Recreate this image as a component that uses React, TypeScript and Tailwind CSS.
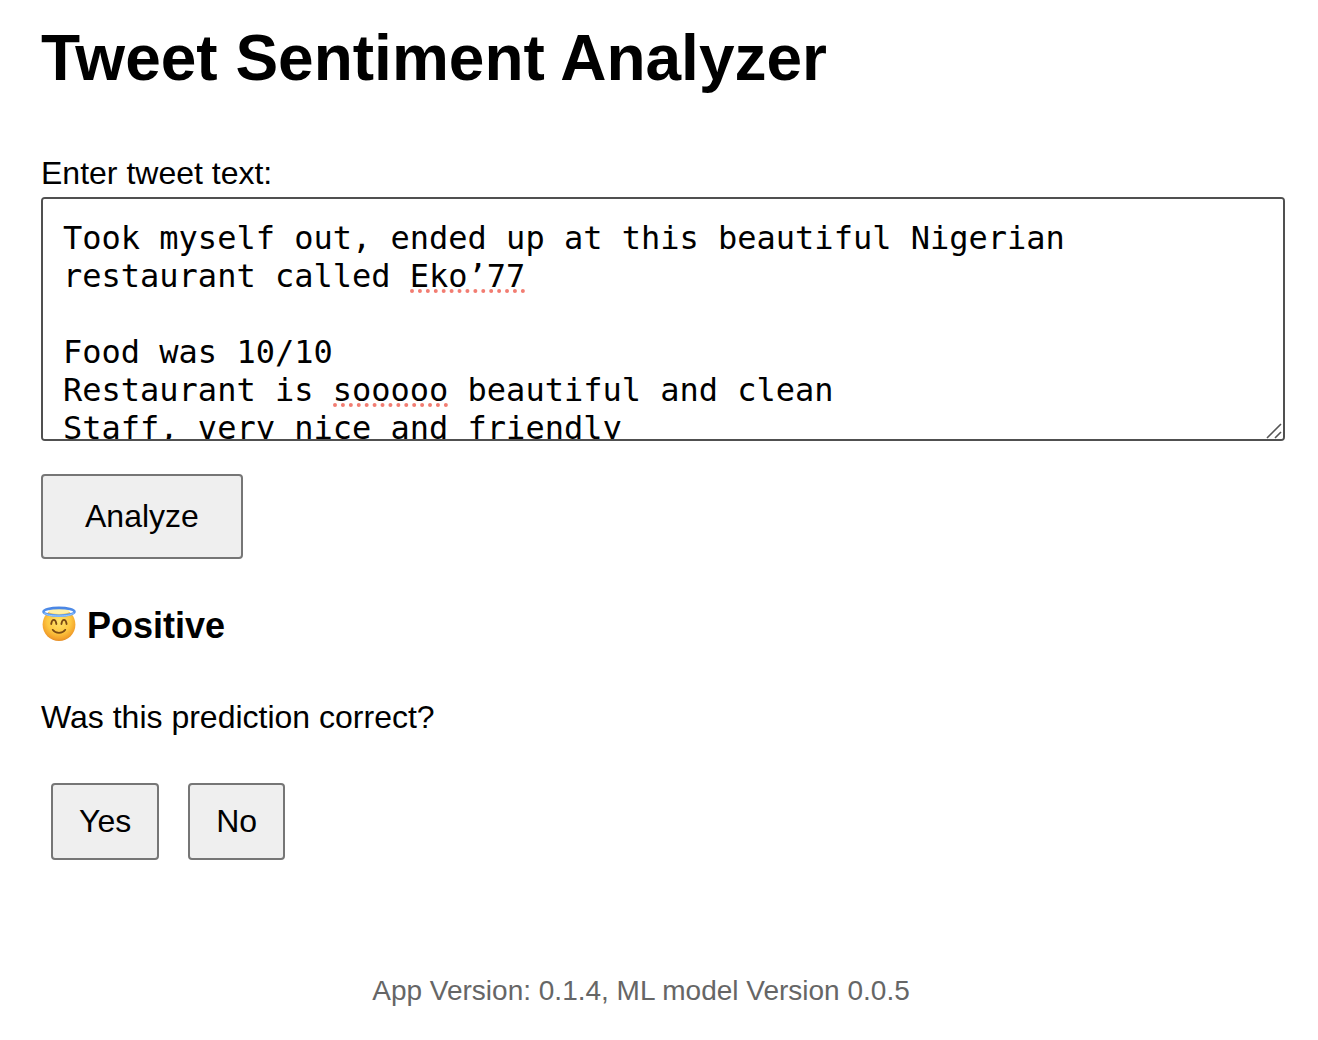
import { useState } from "react";

const SAMPLE = `Took myself out, ended up at this beautiful Nigerian restaurant called Eko’77

Food was 10/10
Restaurant is sooooo beautiful and clean
Staff, very nice and friendly`;

function HaloFace() {
  return (
    <svg viewBox="0 0 36 36" className="mt-px size-9 shrink-0" role="img" aria-label="Smiling face with halo">
      <defs>
        <radialGradient id="face" cx="0.5" cy="0.4" r="0.6">
          <stop offset="0" stopColor="#ffe36b" />
          <stop offset="0.6" stopColor="#fdc741" />
          <stop offset="0.88" stopColor="#f3a32c" />
          <stop offset="1" stopColor="#e58d26" />
        </radialGradient>
        <linearGradient id="halo" x1="0" y1="0" x2="0" y2="1">
          <stop offset="0" stopColor="#4a86e4" />
          <stop offset="1" stopColor="#5f9ff4" />
        </linearGradient>
      </defs>
      <circle cx="18" cy="18.6" r="16.4" fill="url(#face)" />
      <path d="M4.5 6C7 2.8 12 2.2 18 2.2S29 2.8 31.5 6z" fill="#fff" />
      <ellipse cx="18" cy="5.4" rx="10.5" ry="2.7" fill="#fff0a8" />
      <ellipse cx="18" cy="5.8" rx="15.5" ry="3.9" fill="none" stroke="url(#halo)" strokeWidth="2.6" />
      <path d="M3.2 7C6 9.4 11.5 10 18 10S30 9.4 32.8 7" fill="none" stroke="#a4d0ff" strokeWidth="0.9" />
      <path
        d="M10.2 18C10.6 15.3 11.6 13.9 12.8 13.9S15 15.3 15.4 18M20.4 18C20.8 15.3 21.8 13.9 23 13.9S25.2 15.3 25.6 18"
        fill="none"
        stroke="#7a4a14"
        strokeWidth="1.8"
        strokeLinecap="round"
      />
      <path d="M11.7 23.8C14.5 27.8 21.5 27.8 24.3 23.8" fill="none" stroke="#7a4a14" strokeWidth="1.7" strokeLinecap="round" />
    </svg>
  );
}

const buttonStyle = "rounded border-2 border-[#767676] bg-[#efefef] leading-[33px]";

export default function App() {
  const [text, setText] = useState(SAMPLE);
  return (
    <div className="bg-white font-['Liberation_Sans',Arial,sans-serif] text-[32px] leading-9 text-black">
      <main className="pt-5 pr-[33px] pl-[41px]">
        <h1 className="text-[64px] leading-[76px] font-bold">Tweet Sentiment Analyzer</h1>

        <label htmlFor="tweet" className="mt-[59px] block">
          Enter tweet text:
        </label>
        <div className="relative mt-1.5 font-['DejaVu_Sans_Mono',monospace] leading-[38px]">
          <textarea
            id="tweet"
            spellCheck={false}
            value={text}
            onChange={(e) => setText(e.target.value)}
            className="block h-[244px] w-full resize-none rounded-[4px] border-2 border-[#505050] bg-white p-5 outline-none [scrollbar-width:none]"
          />
          {text === SAMPLE && (
            <div aria-hidden="true" className="pointer-events-none absolute inset-0 p-[22px]">
              <div className="mt-[70px] ml-[18ch] w-[6ch] border-b-4 border-dotted border-[#f27d72]" />
              <div className="mt-[110px] ml-[14ch] w-[6ch] border-b-4 border-dotted border-[#f27d72]" />
            </div>
          )}
          <svg
            aria-hidden="true"
            viewBox="0 0 16 16"
            className="pointer-events-none absolute right-[3px] bottom-0.5 size-4 stroke-[#555]"
            strokeWidth="1.6"
          >
            <path d="M1 15 15 1M9 15l6-6" />
          </svg>
        </div>

        <button type="button" className={`${buttonStyle} mt-[33px] block px-[42px] py-6`}>
          Analyze
        </button>

        <h2 className="mt-[46px] flex items-start gap-2.5 text-4xl leading-[42px] font-bold">
          <HaloFace />
          Positive
        </h2>

        <p className="mt-[52px]">Was this prediction correct?</p>
        <div className="mt-12 ml-2.5 flex gap-[29px]">
          <button type="button" className={`${buttonStyle} px-[26px] py-5`}>
            Yes
          </button>
          <button type="button" className={`${buttonStyle} px-[26px] py-5`}>
            No
          </button>
        </div>
      </main>

      <footer className="mt-[115px] pr-9 pb-8 text-center text-[28px] leading-8 text-[#666]">
        App Version: 0.1.4, ML model Version 0.0.5
      </footer>
    </div>
  );
}
